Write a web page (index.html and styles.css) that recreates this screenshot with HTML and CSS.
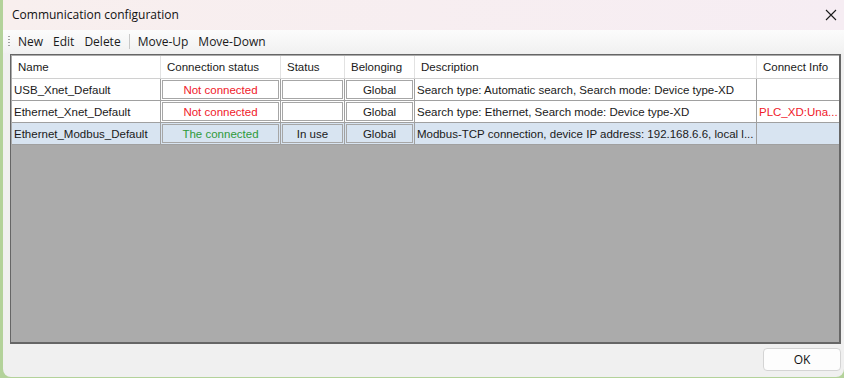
FILE: index.html
```html
<!DOCTYPE html>
<html lang="en">

<head>
    <meta charset="UTF-8">
    <title>Communication configuration</title>
    <link rel="stylesheet" href="styles.css">
</head>

<body>
    <div class="window">
        <header class="titlebar">
            <span class="title">Communication configuration</span>
            <svg class="close" width="12" height="12" viewBox="0 0 12 12">
                <path d="M1 1L11 11M11 1L1 11" stroke="#1a1a1a" stroke-width="1.1" fill="none" />
            </svg>
        </header>

        <nav class="toolbar">
            <span class="grip"></span>
            <span class="tool">New</span>
            <span class="tool">Edit</span>
            <span class="tool">Delete</span>
            <span class="sep"></span>
            <span class="tool">Move-Up</span>
            <span class="tool">Move-Down</span>
        </nav>

        <main class="grid">
            <div class="row head">
                <div class="cell">Name</div>
                <div class="cell">Connection status</div>
                <div class="cell">Status</div>
                <div class="cell">Belonging</div>
                <div class="cell">Description</div>
                <div class="cell">Connect Info</div>
            </div>
            <div class="row">
                <div class="cell">USB_Xnet_Default</div>
                <div class="cell boxed"><span class="box red">Not connected</span></div>
                <div class="cell boxed"><span class="box"></span></div>
                <div class="cell boxed"><span class="box">Global</span></div>
                <div class="cell desc">Search type: Automatic search, Search mode: Device type-XD</div>
                <div class="cell"></div>
            </div>
            <div class="row">
                <div class="cell">Ethernet_Xnet_Default</div>
                <div class="cell boxed"><span class="box red">Not connected</span></div>
                <div class="cell boxed"><span class="box"></span></div>
                <div class="cell boxed"><span class="box">Global</span></div>
                <div class="cell desc">Search type: Ethernet, Search mode: Device type-XD</div>
                <div class="cell info red">PLC_XD:Una...</div>
            </div>
            <div class="row selected">
                <div class="cell">Ethernet_Modbus_Default</div>
                <div class="cell boxed"><span class="box green">The connected</span></div>
                <div class="cell boxed"><span class="box">In use</span></div>
                <div class="cell boxed"><span class="box">Global</span></div>
                <div class="cell desc">Modbus-TCP connection, device IP address: 192.168.6.6, local l...</div>
                <div class="cell"></div>
            </div>
        </main>

        <footer class="footer">
            <button class="ok">OK</button>
        </footer>
    </div>
</body>

</html>
```

FILE: styles.css
```css
* {
    padding: 0;
    margin: 0;
    box-sizing: border-box;
}

body {
    background-color: #b3d29a;
    width: 844px;
    height: 378px;
    overflow: hidden;
    font-family: "Liberation Sans", Arial, sans-serif;
    font-size: 12px;
    color: #1a1a1a;
}

.window {
    margin-left: 3px;
    height: 377px;
    background-color: #f0f0f0;
    border-radius: 0 0 8px 8px;
    display: flex;
    flex-direction: column;
    overflow: hidden;
}

.titlebar {
    height: 30px;
    background: linear-gradient(to right, #f8efee, #f6edf3);
    display: flex;
    align-items: center;
    justify-content: space-between;
    padding: 0 7px 1px 9px;
}

.title {
    font-family: "Open Sans", "Noto Sans", sans-serif;
    font-size: 12px;
    color: #111;
}

.close {
    margin-top: 1px;
}

/* toolbar */
.toolbar {
    height: 23px;
    background: linear-gradient(to bottom, #fcfcfc, #f1f1f1);
    display: flex;
    align-items: center;
    padding-left: 5px;
    font-family: "Open Sans", "Noto Sans", sans-serif;
    font-size: 12px;
}

.grip {
    width: 2px;
    height: 13px;
    margin-right: 3px;
    background-image: radial-gradient(circle, #a0a0a0 0.8px, transparent 1px);
    background-size: 2px 3px;
}

.tool {
    padding: 0 5px;
}

.sep {
    width: 1px;
    height: 15px;
    background-color: #c8c8c8;
    margin: 0 3px;
}

/* data grid */
.grid {
    margin: 1px 3px 0 7px;
    height: 290px;
    background-color: #ababab;
    border: 1px solid #666;
    border-bottom-width: 2px;
    border-right-width: 2px;
    padding: 1px 0 0 1px;
}

.row {
    display: grid;
    grid-template-columns: 149px 120px 64px 70px 342px 1fr;
    height: 22px;
    background-color: #fff;
    border-bottom: 1px solid #a0a0a0;
}

.row.head {
    height: 23px;
    border-bottom: 1px solid #d0d0d0;
}

.row.selected {
    background-color: #d8e4f1;
}

.cell {
    border-right: 1px solid #a0a0a0;
    display: flex;
    align-items: center;
    padding-left: 2px;
    white-space: nowrap;
    overflow: hidden;
    font-size: 11.5px;
}

.head .cell {
    border-right-color: #e2e2e2;
    padding-left: 6px;
    padding-bottom: 1px;
}

.cell:last-child {
    border-right: none;
}

.cell.boxed {
    padding: 1px;
}

.box {
    width: 100%;
    height: 100%;
    border: 1px solid #a6a6a6;
    display: flex;
    align-items: center;
    justify-content: center;
}

.red {
    color: #f0202a;
}

.green {
    color: #2e9a3a;
}

/* bottom button area */
.footer {
    flex: 1;
    display: flex;
    justify-content: flex-end;
    align-items: flex-start;
    padding: 4px 3px 0 0;
}

.ok {
    width: 78px;
    height: 23px;
    background-color: #fdfdfd;
    border: 1px solid #d4d4d4;
    border-radius: 4px;
    font-family: "Open Sans", "Noto Sans", sans-serif;
    font-size: 12px;
    color: #111;
}
```
